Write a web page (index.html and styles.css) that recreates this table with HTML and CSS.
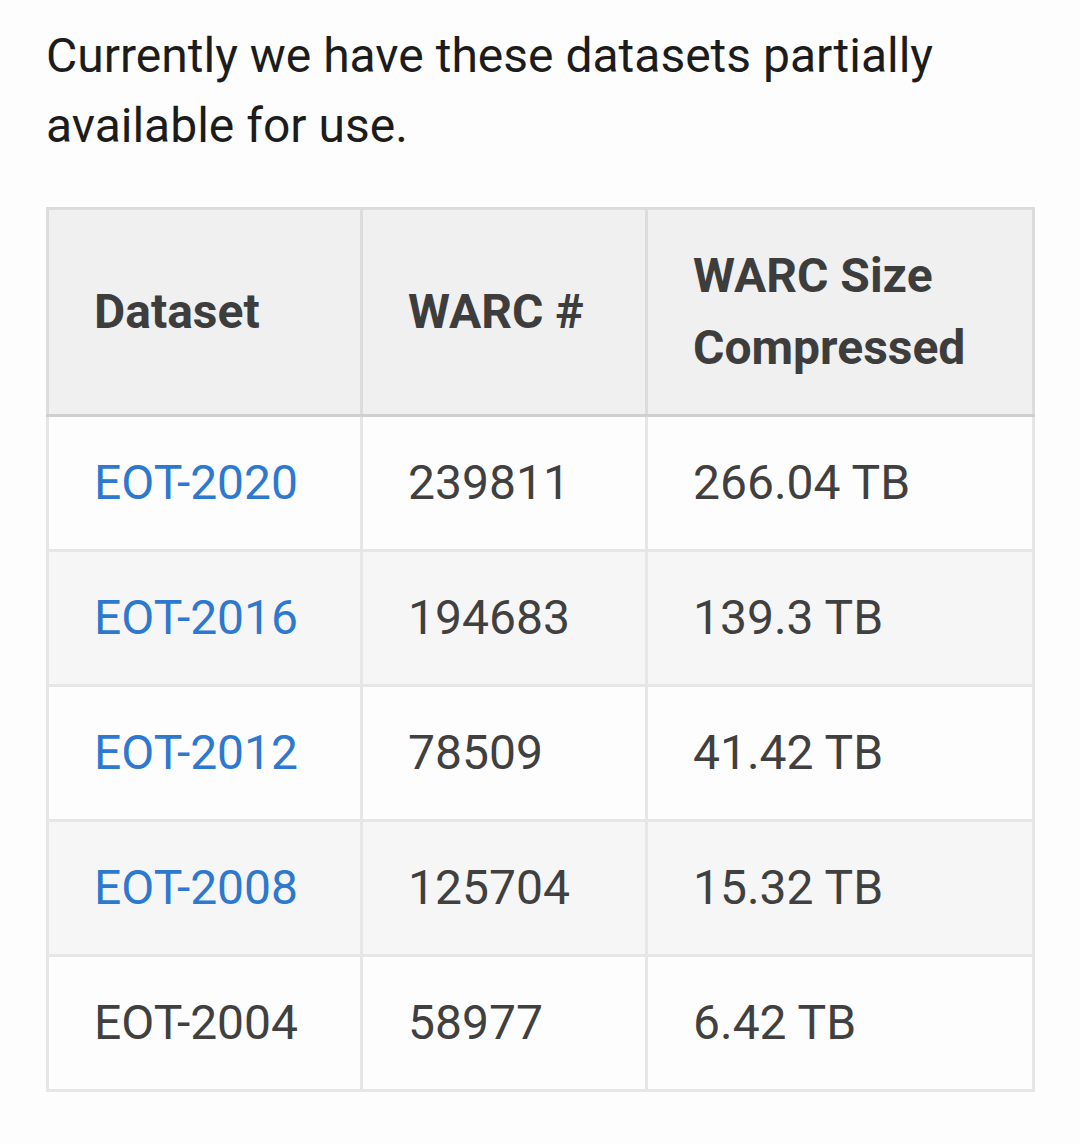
FILE: index.html
```html
<!DOCTYPE html>
<html>
<head>
<meta charset="utf-8">
<link rel="stylesheet" href="styles.css">
</head>
<body>
<div class="page">
  <p class="intro">Currently we have these datasets partially available for use.</p>
  <table class="data">
    <colgroup>
      <col class="c1"><col class="c2"><col class="c3">
    </colgroup>
    <thead>
      <tr><th>Dataset</th><th>WARC #</th><th>WARC Size Compressed</th></tr>
    </thead>
    <tbody>
      <tr><td><a href="#">EOT-2020</a></td><td>239811</td><td>266.04 TB</td></tr>
      <tr><td><a href="#">EOT-2016</a></td><td>194683</td><td>139.3 TB</td></tr>
      <tr><td><a href="#">EOT-2012</a></td><td>78509</td><td>41.42 TB</td></tr>
      <tr><td><a href="#">EOT-2008</a></td><td>125704</td><td>15.32 TB</td></tr>
      <tr><td>EOT-2004</td><td>58977</td><td>6.42 TB</td></tr>
    </tbody>
  </table>
</div>
</body>
</html>
```
FILE: styles.css
```css
html, body {
  margin: 0;
  padding: 0;
  background: #fdfdfd;
}
.page {
  padding: 21px 46px 0 46px;
  font-family: Roboto, "Noto Sans", sans-serif;
}
.intro {
  margin: 0 0 46px 0;
  font-size: 48px;
  line-height: 70px;
  color: #1c1c1c;
  width: 960px;
}
.data {
  width: 986px;
  table-layout: fixed;
  border-collapse: collapse;
  border: 3px solid #e6e6e6;
  font-size: 48px;
  line-height: 72px;
  color: #404040;
}
.c1 { width: 314px; }
.c2 { width: 285px; }
.c3 { width: 387px; }
.data th,
.data td {
  border: 3px solid #e6e6e6;
  padding: 30px 30px 30px 45px;
  text-align: left;
  vertical-align: middle;
}
.data th {
  background: #f0f0f0;
  font-weight: 700;
  color: #3d3d3d;
  border-color: #dcdcdc;
  border-bottom: 3px solid #cfcfcf;
  padding-top: 30px;
  padding-bottom: 30px;
}
.data tbody tr:nth-child(odd) td { background: #fdfdfd; }
.data tbody tr:nth-child(even) td { background: #f6f6f6; }
.data a {
  color: #2d79cf;
  text-decoration: none;
}
```
